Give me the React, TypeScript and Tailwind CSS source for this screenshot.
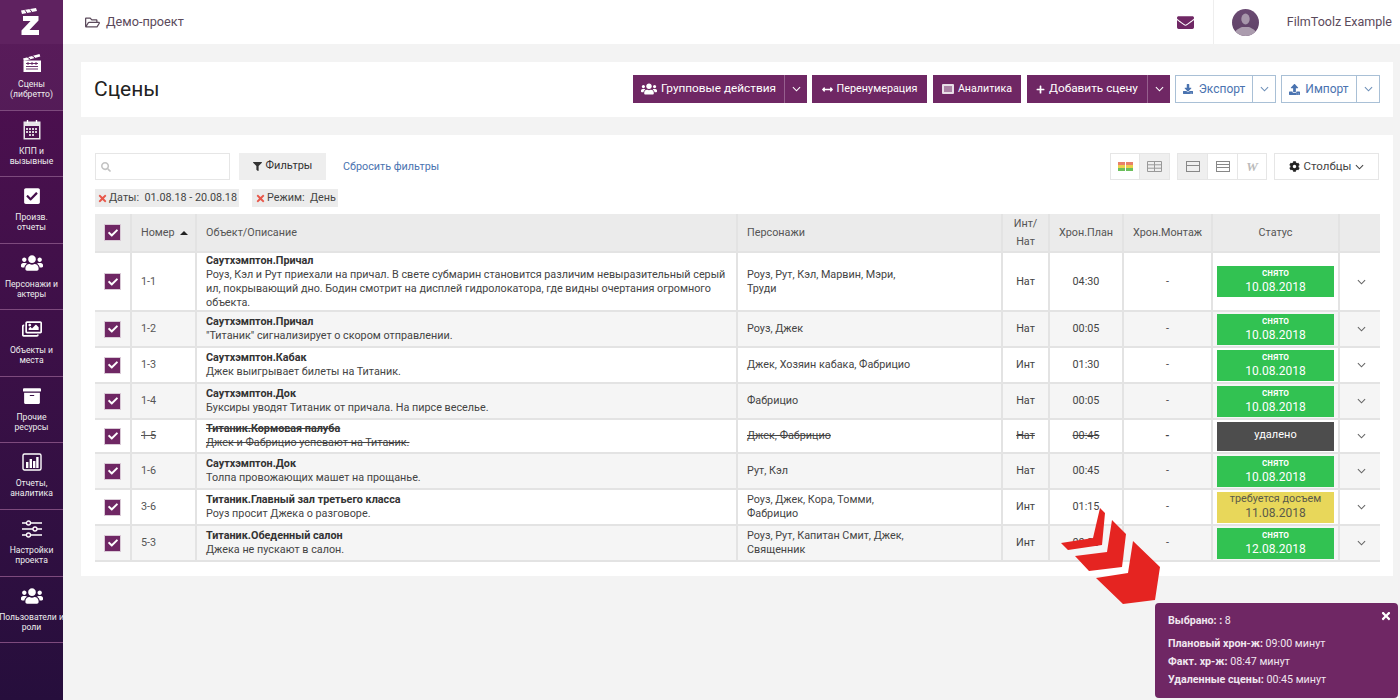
import React from "react";
import { FaUsers, FaCheckSquare, FaRegFolderOpen, FaEnvelope, FaFilter, FaSearch, FaCog, FaPlus, FaTimes, FaDownload, FaUpload, FaArrowsAltH, FaRegImages, FaArchive, FaCheck } from "react-icons/fa";

const Chev = ({ className = "" }: { className?: string }) => (
  <svg viewBox="0 0 10 6" className={"w-[9px] h-[6px] " + className} fill="none" stroke="currentColor" strokeWidth="1.2"><path d="M1 1l4 4 4-4" /></svg>
);

const Clapper = () => (
  <svg viewBox="0 0 20 20" className="w-[20px] h-[20px]" fill="#fff">
    <path d="M1 5.5 17.5 1l.8 2.6L2 8z" />
    <path d="M5 3.8 8 6M10 2.6l3 2.2" stroke="#5a1d5a" strokeWidth="1" />
    <rect x="1.5" y="7.5" width="17.5" height="11.5" />
    <path d="M4 10.5h12M4 13.5h12M4 16h12" stroke="#5a1d5a" strokeWidth="0.9" />
    <path d="M6 9v3M10 9v3M14 9v3" stroke="#5a1d5a" strokeWidth="0.9" />
  </svg>
);
const Calendar = () => (
  <svg viewBox="0 0 18 20" className="w-[18px] h-[20px]">
    <rect x="0.5" y="1.5" width="17" height="18" fill="#e8e4e8" />
    <rect x="2" y="6" width="14" height="12" fill="#4d1250" />
    <path d="M4.500 0v3M13.500 0v3" stroke="#fff" strokeWidth="1.4" />
    <path d="M3 8h2v2H3zM6 8h2v2H6zM9 8h2v2H9zM12 8h2v2h-2zM3 11h2v2H3zM6 11h2v2H6zM9 11h2v2H9zM12 11h2v2h-2zM6 14h2v2H6zM9 14h2v2H9z" fill="#d8d0d8" />
  </svg>
);
const Chart = () => (
  <svg viewBox="0 0 20 20" className="w-[20px] h-[20px]" fill="#fff">
    <rect x="1" y="2" width="18" height="16" rx="1.5" fill="none" stroke="#fff" strokeWidth="1.4" />
    <rect x="4" y="10" width="2.4" height="6" /><rect x="7.6" y="7" width="2.4" height="9" /><rect x="11" y="9" width="2.4" height="7" /><rect x="14.2" y="5" width="2.4" height="11" />
  </svg>
);
const Sliders = () => (
  <svg viewBox="0 0 20 18" className="w-[20px] h-[18px]" stroke="#fff" fill="#4a1050">
    <path d="M0 3h20M0 9h20M0 15h20" strokeWidth="1.6" />
    <circle cx="6.5" cy="3" r="2" strokeWidth="1.3" /><circle cx="13" cy="9" r="2" strokeWidth="1.3" /><circle cx="6.5" cy="15" r="2" strokeWidth="1.3" />
  </svg>
);
const Logo = () => (
  <svg viewBox="0 0 63 44" className="w-[63px] h-[44px]" fill="#fff">
    <path d="M21 10.5 36 8l1 3-15 3z" />
    <path d="M25 10.2l2 3M30 9.4l2 3" stroke="#5f2260" strokeWidth="1" />
    <path d="M23 16h15.5v4.6L29.5 30H39v5H21.5v-4.4L30.5 21H23z" />
  </svg>
);
const GridIcon = ({ className = "" }: { className?: string }) => (
  <svg viewBox="0 0 15 11" className={"w-[15px] h-[11px] " + className} fill="none" stroke="#999" strokeWidth="1"><path d="M.5.5h14v10H.5zM7.5.5v10M.5 3.8h14M.5 7.2h14" /></svg>
);

const nav: [React.ReactNode, string, string, string][] = [
  [<Clapper />, "Сцены", "(либретто)", "h-[67px] bg-white/5"],
  [<Calendar />, "КПП и", "вызывные", "h-[66px]"],
  [<FaCheckSquare className="w-[18px] h-[18px]" />, "Произв.", "отчеты", "h-[67px]"],
  [<FaUsers className="w-[22px] h-[22px]" />, "Персонажи и", "актеры", "h-[66px]"],
  [<FaRegImages className="w-[20px] h-[20px]" />, "Объекты и", "места", "h-[67px]"],
  [<FaArchive className="w-[18px] h-[18px]" />, "Прочие", "ресурсы", "h-[66px]"],
  [<Chart />, "Отчеты,", "аналитика", "h-[67px]"],
  [<Sliders />, "Настройки", "проекта", "h-[67px]"],
  [<FaUsers className="w-[22px] h-[22px]" />, "Пользователи и", "роли", "h-[66px]"],
];

type Row = { n: string; t: string; d: string[]; p: string[]; i: string; plan: string; s: "done" | "del" | "req"; date?: string; h: string; alt?: boolean };
const rows: Row[] = [
  { n: "1-1", t: "Саутхэмптон.Причал", d: ["Роуз, Кэл и Рут приехали на причал. В свете субмарин становится различим невыразительный серый", "ил, покрывающий дно. Бодин смотрит на дисплей гидролокатора, где видны очертания огромного", "объекта."], p: ["Роуз, Рут, Кэл, Марвин, Мэри,", "Труди"], i: "Нат", plan: "04:30", s: "done", date: "10.08.2018", h: "h-[59px]" },
  { n: "1-2", t: "Саутхэмптон.Причал", d: ["\"Титаник\" сигнализирует о скором отправлении."], p: ["Роуз, Джек"], i: "Нат", plan: "00:05", s: "done", date: "10.08.2018", h: "h-[36px]", alt: true },
  { n: "1-3", t: "Саутхэмптон.Кабак", d: ["Джек выигрывает билеты на Титаник."], p: ["Джек, Хозяин кабака, Фабрицио"], i: "Инт", plan: "01:30", s: "done", date: "10.08.2018", h: "h-[36px]" },
  { n: "1-4", t: "Саутхэмптон.Док", d: ["Буксиры уводят Титаник от причала. На пирсе веселье."], p: ["Фабрицио"], i: "Нат", plan: "00:05", s: "done", date: "10.08.2018", h: "h-[36px]", alt: true },
  { n: "1-5", t: "Титаник.Кормовая палуба", d: ["Джек и Фабрицио успевают на Титаник."], p: ["Джек, Фабрицио"], i: "Нат", plan: "00:45", s: "del", h: "h-[34px]" },
  { n: "1-6", t: "Саутхэмптон.Док", d: ["Толпа провожающих машет на прощанье."], p: ["Рут, Кэл"], i: "Нат", plan: "00:45", s: "done", date: "10.08.2018", h: "h-[36px]", alt: true },
  { n: "3-6", t: "Титаник.Главный зал третьего класса", d: ["Роуз просит Джека о разговоре."], p: ["Роуз, Джек, Кора, Томми,", "Фабрицио"], i: "Инт", plan: "01:15", s: "req", date: "11.08.2018", h: "h-[36px]" },
  { n: "5-3", t: "Титаник.Обеденный салон", d: ["Джека не пускают в салон."], p: ["Роуз, Рут, Капитан Смит, Джек,", "Священник"], i: "Инт", plan: "00:30", s: "done", date: "12.08.2018", h: "h-[36px]", alt: true },
];

const Check = () => (
  <span className="inline-flex w-[17px] h-[17px] items-center justify-center bg-[#6f2764] border border-[#d9c9d6] text-white align-middle">
    <FaCheck className="w-[10px] h-[10px]" />
  </span>
);

const Status = ({ r }: { r: Row }) => {
  if (r.s === "del") return <div className="w-[117px] h-[29px] mx-auto pt-[6px] bg-[#4d4d4d] text-white text-center text-[11px] leading-[14px]">удалено</div>;
  const req = r.s === "req";
  return (
    <div className={"w-[117px] h-[31px] mx-auto text-center " + (req ? "bg-[#e8d75a] text-[#5a5a4a]" : "bg-[#32c252] text-white")}>
      <div className={req ? "text-[10.8px] leading-[13px]" : "text-[10px] leading-[13px] font-medium"}>{req ? "требуется досъем" : "снято"}</div>
      <div className="text-[12px] leading-[17px]">{r.date}</div>
    </div>
  );
};

const th = "border-r-2 border-[#e3e3e3] font-normal text-[#555]";
const td = "border-r-2 border-[#e3e3e3] text-center";

export default function App() {
  return (
    <div className="w-[1400px] h-[700px] overflow-hidden relative flex bg-[#f3f3f3] text-[#444]" style={{ fontFamily: "Roboto, 'Noto Sans', sans-serif" }}>
      <aside className="w-[63px] shrink-0 h-full flex flex-col bg-gradient-to-b from-[#520f52] to-[#260e3c] text-white">
        <div className="h-[44px] bg-[#5f2260] shrink-0"><Logo /></div>
        {nav.map(([ic, a, b, c], i) => (
          <div key={i} className={"flex flex-col items-center border-b border-[#7d4a7d] pt-[8px] text-[8.6px] leading-[9.5px] text-center whitespace-nowrap text-[#eee] " + c}>
            <div className="h-[22px] flex items-center justify-center text-white">{ic}</div>
            <div className="mt-[6px]">{a}</div>
            <div>{b}</div>
          </div>
        ))}
      </aside>

      <main className="flex-1 min-w-0 flex flex-col">
        <header className="h-[44px] bg-white flex items-center shrink-0">
          <FaRegFolderOpen className="ml-[22px] w-[15px] h-[15px] text-[#5b4a5b]" />
          <span className="ml-[6px] text-[12.7px] text-[#5b4a5b]">Демо-проект</span>
          <FaEnvelope className="ml-auto w-[17px] h-[17px] text-[#6f2764]" />
          <div className="ml-[19px] h-full w-px bg-[#eee]" />
          <svg viewBox="0 0 27 27" className="ml-[18px] w-[27px] h-[27px]">
            <defs><clipPath id="av"><circle cx="13.5" cy="13.5" r="13.5" /></clipPath><linearGradient id="ag" x1="0" y1="0" x2="0" y2="1"><stop offset="0" stopColor="#6a4a72" /><stop offset="1" stopColor="#5f4266" /></linearGradient></defs>
            <g clipPath="url(#av)">
              <rect width="27" height="27" fill="url(#ag)" />
              <ellipse cx="13.5" cy="10" rx="4.2" ry="5.4" fill="#a797ab" />
              <path d="M2 27c0-6 5-7.5 8-9h7c3 1.500 8 3 8 9z" fill="#ab9cae" />
            </g>
          </svg>
          <span className="ml-[28px] mr-[8px] text-[12.5px] text-[#5b4a5b]">FilmToolz Example</span>
        </header>

        <section className="mt-[18px] ml-[18px] mr-[7px] h-[55px] bg-white flex items-center pl-[13px] pr-[13px] shrink-0">
          <h1 className="text-[21px] text-[#222] font-normal">Сцены</h1>
          <div className="ml-auto mb-[1px] flex items-stretch h-[28px] text-[11.8px] text-white">
            <button className="w-[151px] bg-[#6f2764] flex items-center justify-center gap-[4px]"><FaUsers className="w-[16px] h-[16px]" />Групповые действия</button>
            <button className="w-[23px] bg-[#6f2764] border-l border-[#96608e] flex items-center justify-center"><Chev /></button>
            <button className="ml-[5px] w-[115px] bg-[#6f2764] flex items-center justify-center gap-[4px] text-[10.8px]"><FaArrowsAltH className="w-[11px] h-[11px]" />Перенумерация</button>
            <button className="ml-[6px] w-[88px] bg-[#6f2764] flex items-center justify-center gap-[4px] text-[10.7px]">
              <svg viewBox="0 0 12 10" className="w-[12px] h-[10px]"><rect width="12" height="10" rx="1" fill="#e8dfe7" /><path d="M2 3h8M2 5h8M2 7h8" stroke="#6f2764" strokeWidth="1" /></svg>
              Аналитика</button>
            <button className="ml-[6px] w-[120px] bg-[#6f2764] flex items-center justify-center gap-[4px]"><FaPlus className="w-[9px] h-[9px]" />Добавить сцену</button>
            <button className="w-[23px] bg-[#6f2764] border-l border-[#96608e] flex items-center justify-center"><Chev /></button>
            <button className="ml-[5px] w-[78px] border border-[#a9c0d6] text-[#4a73b0] flex items-center justify-center gap-[6px] text-[12px]"><FaDownload className="w-[10px] h-[10px]" />Экспорт</button>
            <button className="w-[23px] border border-l-0 border-[#a9c0d6] text-[#6d8fb8] flex items-center justify-center"><Chev /></button>
            <button className="ml-[5px] w-[76px] border border-[#a9c0d6] text-[#4a73b0] flex items-center justify-center gap-[5px] text-[12px]"><FaUpload className="w-[11px] h-[11px]" />Импорт</button>
            <button className="w-[23px] border border-l-0 border-[#a9c0d6] text-[#6d8fb8] flex items-center justify-center"><Chev /></button>
          </div>
        </section>

        <section className="mt-[18px] ml-[18px] mr-[7px] h-[441px] bg-white px-[14px] pt-[18px] shrink-0 relative">
          <div className="flex items-stretch h-[27px] text-[11px]">
            <div className="w-[135px] border border-[#e6e6e6] flex items-center pl-[5px]"><FaSearch className="w-[10px] h-[10px] text-[#c3c3c3]" /></div>
            <button className="ml-[9px] w-[87px] bg-[#eeeeee] flex items-center justify-center gap-[4px] text-[#333]"><FaFilter className="w-[9px] h-[9px]" />Фильтры</button>
            <a className="ml-[17px] pt-[1px] flex items-center text-[#4a73b0] text-[10.8px]">Сбросить фильтры</a>
            <div className="ml-auto flex">
              <div className="w-[30px] border border-[#e6e6e6] flex flex-col items-center justify-center">
                <div className="flex gap-[1px]"><i className="block w-[7px] h-[3px] bg-[#e8806a]" /><i className="block w-[7px] h-[3px] bg-[#e8806a]" /></div>
                <div className="flex gap-[1px]"><i className="block w-[7px] h-[3px] bg-[#ecd04c]" /><i className="block w-[7px] h-[3px] bg-[#ecd04c]" /></div>
                <div className="flex gap-[1px]"><i className="block w-[7px] h-[3px] bg-[#6cbf5c]" /><i className="block w-[7px] h-[3px] bg-[#6cbf5c]" /></div>
              </div>
              <div className="w-[30px] border border-l-0 border-[#e6e6e6] bg-[#efefef] flex items-center justify-center"><GridIcon /></div>
              <div className="ml-[7px] w-[31px] border border-[#e6e6e6] bg-[#efefef] flex items-center justify-center">
                <div className="w-[14px] h-[11px] border border-[#888] flex flex-col"><span className="h-[4px] border-b border-[#888]" /></div>
              </div>
              <div className="w-[30px] border border-l-0 border-[#e6e6e6] flex items-center justify-center">
                <div className="w-[14px] h-[11px] border border-[#888] flex flex-col"><span className="h-[3px] border-b border-[#888]" /><span className="h-[3px] border-b border-[#888]" /></div>
              </div>
              <div className="w-[29px] border border-l-0 border-[#e6e6e6] flex items-center justify-center text-[#bbb] italic font-bold text-[13px]" style={{ fontFamily: "'Liberation Serif', serif" }}>W</div>
              <button className="ml-[7px] w-[105px] border border-[#e6e6e6] flex items-center justify-center gap-[4px] text-[11.5px] text-[#444]"><FaCog className="w-[11px] h-[11px] text-[#222]" />Столбцы<Chev className="w-[7px] h-[5px]" /></button>
            </div>
          </div>

          <div className="mt-[9px] flex gap-[13px] text-[10.8px] leading-[18px] text-[#444]">
            <div className="h-[18px] w-[144px] pl-[2px] bg-[#ececec] flex items-center whitespace-nowrap"><FaTimes className="w-[11px] h-[11px] text-[#e8574a] mr-[1px]" />Даты:&nbsp; 01.08.18 - 20.08.18</div>
            <div className="h-[18px] w-[86px] pl-[3px] bg-[#ececec] flex items-center whitespace-nowrap"><FaTimes className="w-[11px] h-[11px] text-[#e8574a] mr-[1px]" />Режим:&nbsp; День</div>
          </div>

          <table className="mt-[7px] w-[1285px] table-fixed border-collapse text-[10.8px] leading-[14px]">
            <colgroup>
              <col className="w-[36px]" /><col className="w-[65px]" /><col className="w-[541px]" /><col className="w-[265px]" /><col className="w-[47px]" /><col className="w-[74px]" /><col className="w-[89px]" /><col className="w-[127px]" /><col className="w-[41px]" />
            </colgroup>
            <thead>
              <tr className="h-[38px] bg-[#ebebeb] border-b-2 border-[#e3e3e3]">
                <th className={th}><Check /></th>
                <th className={th + " text-left pl-[9px]"}><span className="inline-flex items-center gap-[5px]">Номер<span className="w-0 h-0 border-x-[4px] border-x-transparent border-b-[4px] border-b-[#222]" /></span></th>
                <th className={th + " text-left pl-[9px]"}>Объект/Описание</th>
                <th className={th + " text-left pl-[9px]"}>Персонажи</th>
                <th className={th + " leading-[18px]"}>Инт/<br />Нат</th>
                <th className={th}>Хрон.План</th>
                <th className={th}>Хрон.Монтаж</th>
                <th className={th}>Статус</th>
                <th />
              </tr>
            </thead>
            <tbody>
              {rows.map((r) => {
                const del = r.s === "del";
                const st = del ? " line-through" : "";
                return (
                  <tr key={r.n} className={r.h + " border-b-2 border-[#e3e3e3] " + (r.alt ? "bg-[#f5f5f5]" : "bg-white")}>
                    <td className={td + " p-0"}><Check /></td>
                    <td className={"border-r-2 border-[#e3e3e3] pl-[9px] text-[#555]" + st}>{r.n}</td>
                    <td className={"border-r-2 border-[#e3e3e3] pl-[9px] whitespace-nowrap" + st}>
                      <div className="font-bold text-[#333] leading-[14px]">{r.t}</div>
                      {r.d.map((l) => <div key={l} className="leading-[14px]">{l}</div>)}
                    </td>
                    <td className={"border-r-2 border-[#e3e3e3] pl-[9px]" + st}>{r.p.map((l) => <div key={l}>{l}</div>)}</td>
                    <td className={td + st}>{r.i}</td>
                    <td className={td + st}>{r.plan}</td>
                    <td className={td + (del ? " font-bold" : "")}>-</td>
                    <td className={td + " p-0"}><Status r={r} /></td>
                    <td className="text-center p-0 pl-[2px]"><Chev className="inline-block text-[#666]" /></td>
                  </tr>
                );
              })}
            </tbody>
          </table>
        </section>
      </main>

      <svg className="absolute left-[1055px] top-[503px] w-[110px] h-[105px]" viewBox="1055 503 110 105" fill="#e52421">
        <polygon points="1100,508 1105,513 1102,545 1068,550 1061,543 1093,538" />
        <polygon points="1112,520 1126,534 1122,567 1089,571 1075,556 1107,552" />
        <polygon points="1133,541 1160,567 1155,600 1123,604 1096,578 1128,573" />
      </svg>

      <div className="absolute left-[1155px] top-[603px] w-[243px] h-[95px] rounded-[4px] bg-[#6f2764] text-[#f0e6ef] text-[10.7px] pl-[13px] pt-[11px]">
        <FaTimes className="absolute right-[6px] top-[7px] w-[12px] h-[12px] text-white" />
        <div className="leading-[14px]"><b className="font-bold">Выбрано: :</b> 8</div>
        <div className="mt-[7px] leading-[18px]"><b className="font-bold">Плановый хрон-ж:</b> 09:00 минут</div>
        <div className="leading-[18px]"><b className="font-bold">Факт. хр-ж:</b> 08:47 минут</div>
        <div className="leading-[18px]"><b className="font-bold">Удаленные сцены:</b> 00:45 минут</div>
      </div>
    </div>
  );
}
